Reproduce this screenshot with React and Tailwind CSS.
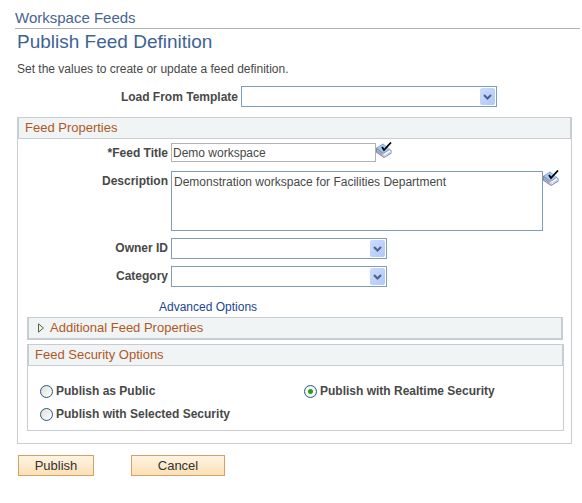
import { useState } from "react";

const TEMPLATES = [""];
const OWNERS = [""];
const CATEGORIES = [""];

const SECURITY_OPTIONS = [
  { value: "public", label: "Publish as Public" },
  { value: "realtime", label: "Publish with Realtime Security" },
  { value: "selected", label: "Publish with Selected Security" },
];

const SpellCheckIcon = () => (
  <svg width="16" height="16" viewBox="0 0 16 16" aria-hidden="true">
    <path d="M0 6 L7 1.5 L15.5 8.5 V11.5 L8 16 L0 10.5 Z" fill="#7f8ba0" />
    <path d="M1 6 L7 2.2 L14 7 L7.5 11 Z" fill="#a3cbf8" />
    <path d="M8 11.5 L14 7.8 L15 10.5 L8.5 14.8 Z" fill="#f6faff" />
    <path d="M1 7.5 L6.5 11.5 V13.8 L1 10 Z" fill="#b9cfec" />
    <path d="M1 8.8 L6.5 12.7" stroke="#6d7c96" strokeWidth="0.7" />
    <path d="M6.5 11.5 L8.5 11.5 V15 L6.5 14 Z" fill="#f6cdc6" />
    <path d="M9.5 13 L14.8 9.8" stroke="#a9c0e0" strokeWidth="0.8" />
    <path d="M6 5 L8 8 L15 0.5" fill="none" stroke="#000" strokeWidth="1.8" />
  </svg>
);

const SpellCheckButton = ({ label }) => (
  <button type="button" aria-label={label} className="-mt-px h-4 w-4 shrink-0 self-start">
    <SpellCheckIcon />
  </button>
);

const SelectBox = ({ id, options, className }) => (
  <div className={`relative h-[21px] ${className}`}>
    <select
      id={id}
      className="block h-full w-full appearance-none border border-[#7f9db9] bg-white pl-1 pr-5 text-xs"
    >
      {options.map((option) => (
        <option key={option} value={option}>
          {option}
        </option>
      ))}
    </select>
    <span className="pointer-events-none absolute right-0.5 top-0.5 flex h-[17px] w-[15px] items-center justify-center rounded-xs bg-linear-to-br from-[#cddcfd] to-[#afc8f8]">
      <svg width="9" height="6" viewBox="0 0 9 6" aria-hidden="true">
        <path d="M1 1 L4.5 4.5 L8 1" fill="none" stroke="#4d6185" strokeWidth="2" />
      </svg>
    </span>
  </div>
);

const FormRow = ({ id, label, children }) => (
  <div className="grid grid-cols-[150px_1fr] gap-[3px]">
    <label htmlFor={id} className="pt-0.5 text-right text-xs font-bold">
      {label}
    </label>
    <div className="flex">{children}</div>
  </div>
);

const App = () => {
  const [title, setTitle] = useState("Demo workspace");
  const [description, setDescription] = useState(
    "Demonstration workspace for Facilities Department"
  );
  const [security, setSecurity] = useState("realtime");

  return (
    <main className="bg-white pt-2 font-['Liberation_Sans',Arial,sans-serif] text-xs text-[#484848]">
      <p className="ml-[15px] mr-0.5 border-b border-[#b3b3b3] pb-px text-[15px] leading-[19px] text-[#48658f]">
        Workspace Feeds
      </p>

      <form className="ml-[17px] mr-2.5" onSubmit={(e) => e.preventDefault()}>
        <h1 className="text-[19px] leading-[26px] text-[#3d6394]">Publish Feed Definition</h1>
        <p className="mt-1.5">Set the values to create or update a feed definition.</p>

        <div className="mt-[9px] grid grid-cols-[221px_1fr] gap-[3px]">
          <label htmlFor="template" className="pt-[3px] text-right font-bold">
            Load From Template
          </label>
          <SelectBox id="template" options={TEMPLATES} className="w-64" />
        </div>

        <section className="mt-2.5 border border-[#c8cdd3]">
          <h2 className="border-x border-b border-[#c8cdd3] bg-[#f0f4f5] pl-1.5 text-[13px] leading-5 text-[#b0581f]">
            Feed Properties
          </h2>

          <div className="mt-1 flex flex-col">
            <FormRow id="feed-title" label="*Feed Title">
              <input
                id="feed-title"
                type="text"
                value={title}
                onChange={(e) => setTitle(e.target.value)}
                className="h-[19px] w-[205px] border border-[#b2b2b2] bg-white px-px text-xs"
              />
              <SpellCheckButton label="Spell check title" />
            </FormRow>
            <div className="mt-[9px]">
              <FormRow id="description" label="Description">
                <textarea
                  id="description"
                  value={description}
                  onChange={(e) => setDescription(e.target.value)}
                  className="h-[60px] w-[372px] resize-none border border-[#7f9db9] bg-white px-0.5 py-0.5 text-xs"
                />
                <SpellCheckButton label="Spell check description" />
              </FormRow>
            </div>
            <div className="mt-[7px] flex flex-col gap-[7px]">
              <FormRow id="owner" label="Owner ID">
                <SelectBox id="owner" options={OWNERS} className="w-[216px]" />
              </FormRow>
              <FormRow id="category" label="Category">
                <SelectBox id="category" options={CATEGORIES} className="w-[216px]" />
              </FormRow>
            </div>
          </div>

          <a href="#advanced" className="ml-[141px] mt-3 block w-fit text-[#1b4690]">
            Advanced Options
          </a>

          <button
            type="button"
            aria-expanded="false"
            className="ml-[9px] mr-2 mt-0.5 flex w-[calc(100%-17px)] items-center gap-1.5 border-2 border-t border-[#c8cdd3] bg-[#f0f4f5] pl-[9px] text-left text-[13px] leading-5 text-[#b0581f]"
          >
            <svg width="6" height="10" viewBox="0 0 6 10" aria-hidden="true">
              <path d="M0.5 0.8 L5.4 5 L0.5 9.2 Z" fill="#eef2d8" stroke="#5d6150" />
            </svg>
            Additional Feed Properties
          </button>

          <section className="mb-3 ml-[9px] mr-[7px] mt-1 border border-[#c8cdd3]">
            <h2 className="border-x border-b border-[#c8cdd3] bg-[#f0f4f5] pl-1.5 text-[13px] leading-5 text-[#b0581f]">
              Feed Security Options
            </h2>
            <fieldset
              aria-label="Feed Security Options"
              className="grid grid-cols-[264px_1fr] gap-y-[7px] pb-2 pl-3 pt-[17px]"
            >
              {SECURITY_OPTIONS.map(({ value, label }) => (
                <label key={value} className="flex items-center gap-[3px] font-bold">
                  <input
                    type="radio"
                    name="security"
                    value={value}
                    checked={security === value}
                    onChange={() => setSecurity(value)}
                    className="h-[13px] w-[13px] appearance-none rounded-full border border-[#2b5580] bg-linear-to-br from-[#dfdfd8] to-white checked:bg-[radial-gradient(circle,#21a121_0px,#21a121_2px,#f4f4f0_3px)]"
                  />
                  {label}
                </label>
              ))}
            </fieldset>
          </section>
        </section>

        <div className="ml-px mt-[11px] flex gap-[37px] text-[13px] text-[#333]">
          <button
            type="submit"
            className="h-[21px] w-[76px] border border-[#d9a066] bg-linear-to-b from-[#fef4e4] to-[#fae0b4] leading-4"
          >
            Publish
          </button>
          <button
            type="button"
            className="h-[21px] w-[94px] border border-[#d9a066] bg-linear-to-b from-[#fef4e4] to-[#fae0b4] leading-4"
          >
            Cancel
          </button>
        </div>
      </form>
    </main>
  );
};

export default App;
